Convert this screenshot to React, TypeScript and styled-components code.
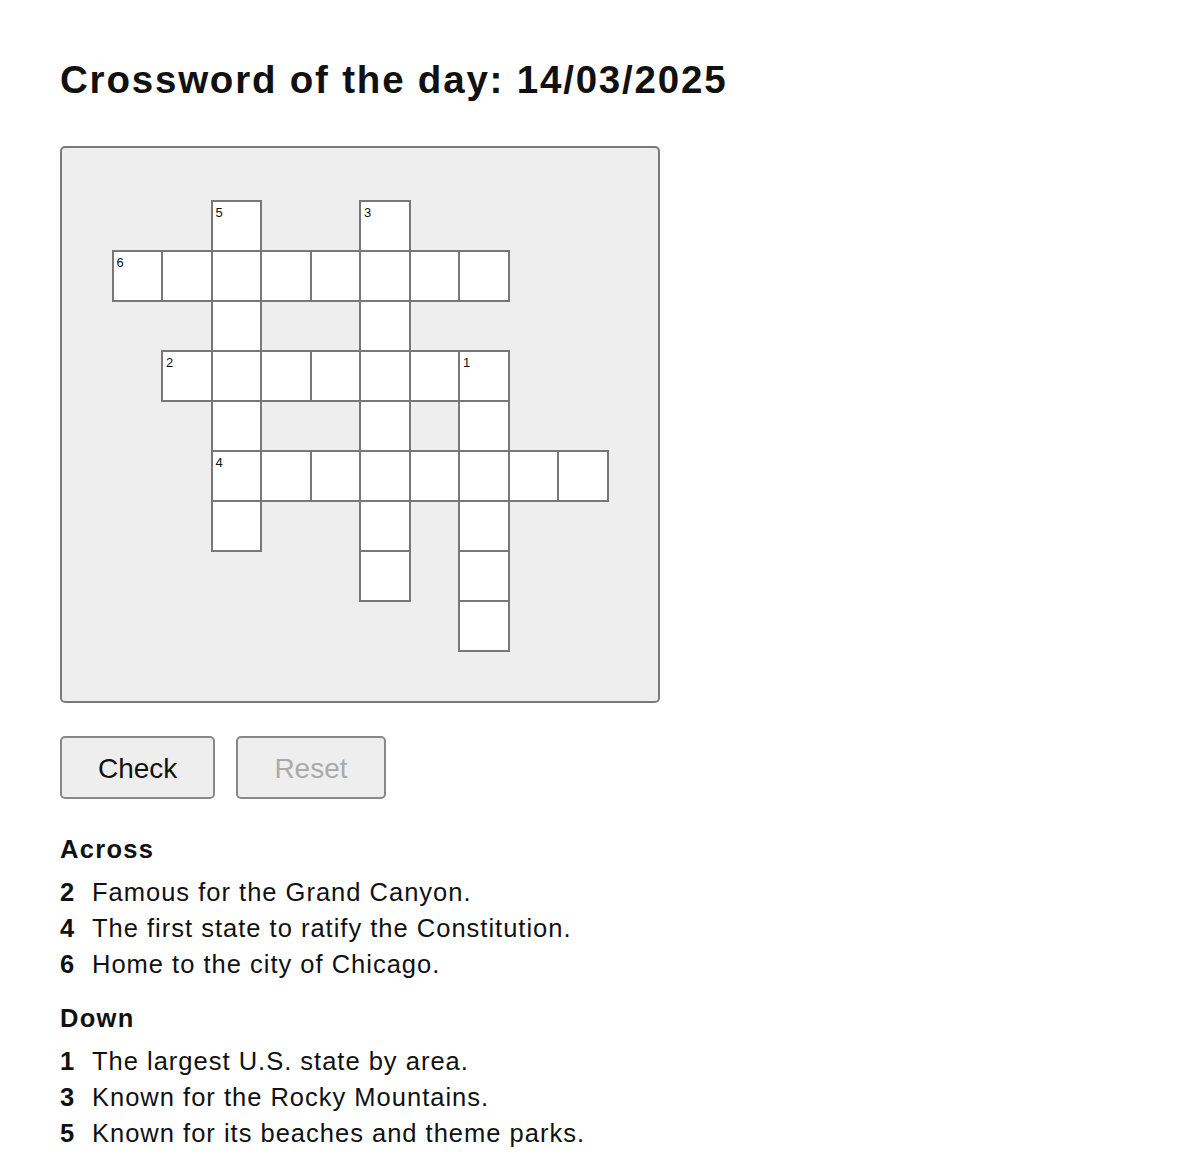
import styled, { createGlobalStyle } from "styled-components";

const GlobalStyle = createGlobalStyle`
  body {
    margin: 0;
    background: #fff;
    color: #111;
    font-family: "Liberation Sans", Arial, Helvetica, sans-serif;
  }
`;

const Page = styled.div`
  padding: 57px 60px 30px;
`;

const Title = styled.h1`
  margin: 0 0 43px;
  font-size: 38.5px;
  letter-spacing: 1.8px;
  line-height: 1.2;
  font-weight: 700;
`;

const Board = styled.div`
  box-sizing: border-box;
  width: 600px;
  height: 557px;
  background: #eee;
  border: 2px solid #7a7a7a;
  border-radius: 5px;
  display: flex;
  align-items: center;
  justify-content: center;
`;

const Grid = styled.div`
  display: grid;
  grid-template-columns: repeat(10, 49.5px);
  grid-template-rows: repeat(9, 50px);
  margin-top: 2px;
`;

const Cell = styled.div<{ $row: number; $col: number }>`
  grid-row: ${(p) => p.$row + 1};
  grid-column: ${(p) => p.$col + 1};
  position: relative;
  background: #fff;
  box-shadow: 0 0 0 1px #777, inset 0 0 0 1px #777;
`;

const CellNumber = styled.span`
  position: absolute;
  top: 5px;
  left: 4px;
  font-size: 13px;
  line-height: 1;
  color: #111;
`;

const Buttons = styled.div`
  display: flex;
  gap: 21px;
  margin-top: 33px;
`;

const Button = styled.button`
  box-sizing: border-box;
  height: 63px;
  padding: 3px 36px 0;
  background: #eee;
  border: 2px solid #888;
  border-radius: 5px;
  font-family: inherit;
  font-size: 28px;
  color: #111;
  cursor: pointer;
  &:disabled {
    color: #aaa;
    cursor: default;
  }
`;

const Section = styled.section`
  margin-top: 32px;
  & + & {
    margin-top: 18px;
  }
`;

const Heading = styled.h2`
  margin: 0 0 7px;
  font-size: 25.5px;
  letter-spacing: 1.3px;
  line-height: 36px;
  font-weight: 700;
`;

const ClueList = styled.ol`
  list-style: none;
  margin: 0;
  padding: 0;
`;

const Clue = styled.li`
  display: flex;
  font-size: 25.5px;
  letter-spacing: 1px;
  line-height: 36px;
`;

const ClueNumber = styled.b`
  width: 32px;
  flex-shrink: 0;
  letter-spacing: 0;
`;

const cells: [number, number, number?][] = [
  [0, 2, 5],
  [0, 5, 3],
  [1, 0, 6],
  [1, 1],
  [1, 2],
  [1, 3],
  [1, 4],
  [1, 5],
  [1, 6],
  [1, 7],
  [2, 2],
  [2, 5],
  [3, 1, 2],
  [3, 2],
  [3, 3],
  [3, 4],
  [3, 5],
  [3, 6],
  [3, 7, 1],
  [4, 2],
  [4, 5],
  [4, 7],
  [5, 2, 4],
  [5, 3],
  [5, 4],
  [5, 5],
  [5, 6],
  [5, 7],
  [5, 8],
  [5, 9],
  [6, 2],
  [6, 5],
  [6, 7],
  [7, 5],
  [7, 7],
  [8, 7],
];

const across = [
  { n: 2, text: "Famous for the Grand Canyon." },
  { n: 4, text: "The first state to ratify the Constitution." },
  { n: 6, text: "Home to the city of Chicago." },
];

const down = [
  { n: 1, text: "The largest U.S. state by area." },
  { n: 3, text: "Known for the Rocky Mountains." },
  { n: 5, text: "Known for its beaches and theme parks." },
];

const App = () => {
  return (
    <>
      <GlobalStyle />
      <Page>
        <Title>Crossword of the day: 14/03/2025</Title>
        <Board>
          <Grid>
            {cells.map(([r, c, n]) => (
              <Cell key={`${r}-${c}`} $row={r} $col={c}>
                {n && <CellNumber>{n}</CellNumber>}
              </Cell>
            ))}
          </Grid>
        </Board>
        <Buttons>
          <Button>Check</Button>
          <Button disabled>Reset</Button>
        </Buttons>
        <Section>
          <Heading>Across</Heading>
          <ClueList>
            {across.map((c) => (
              <Clue key={c.n}>
                <ClueNumber>{c.n}</ClueNumber>
                {c.text}
              </Clue>
            ))}
          </ClueList>
        </Section>
        <Section>
          <Heading>Down</Heading>
          <ClueList>
            {down.map((c) => (
              <Clue key={c.n}>
                <ClueNumber>{c.n}</ClueNumber>
                {c.text}
              </Clue>
            ))}
          </ClueList>
        </Section>
      </Page>
    </>
  );
};

export default App;
